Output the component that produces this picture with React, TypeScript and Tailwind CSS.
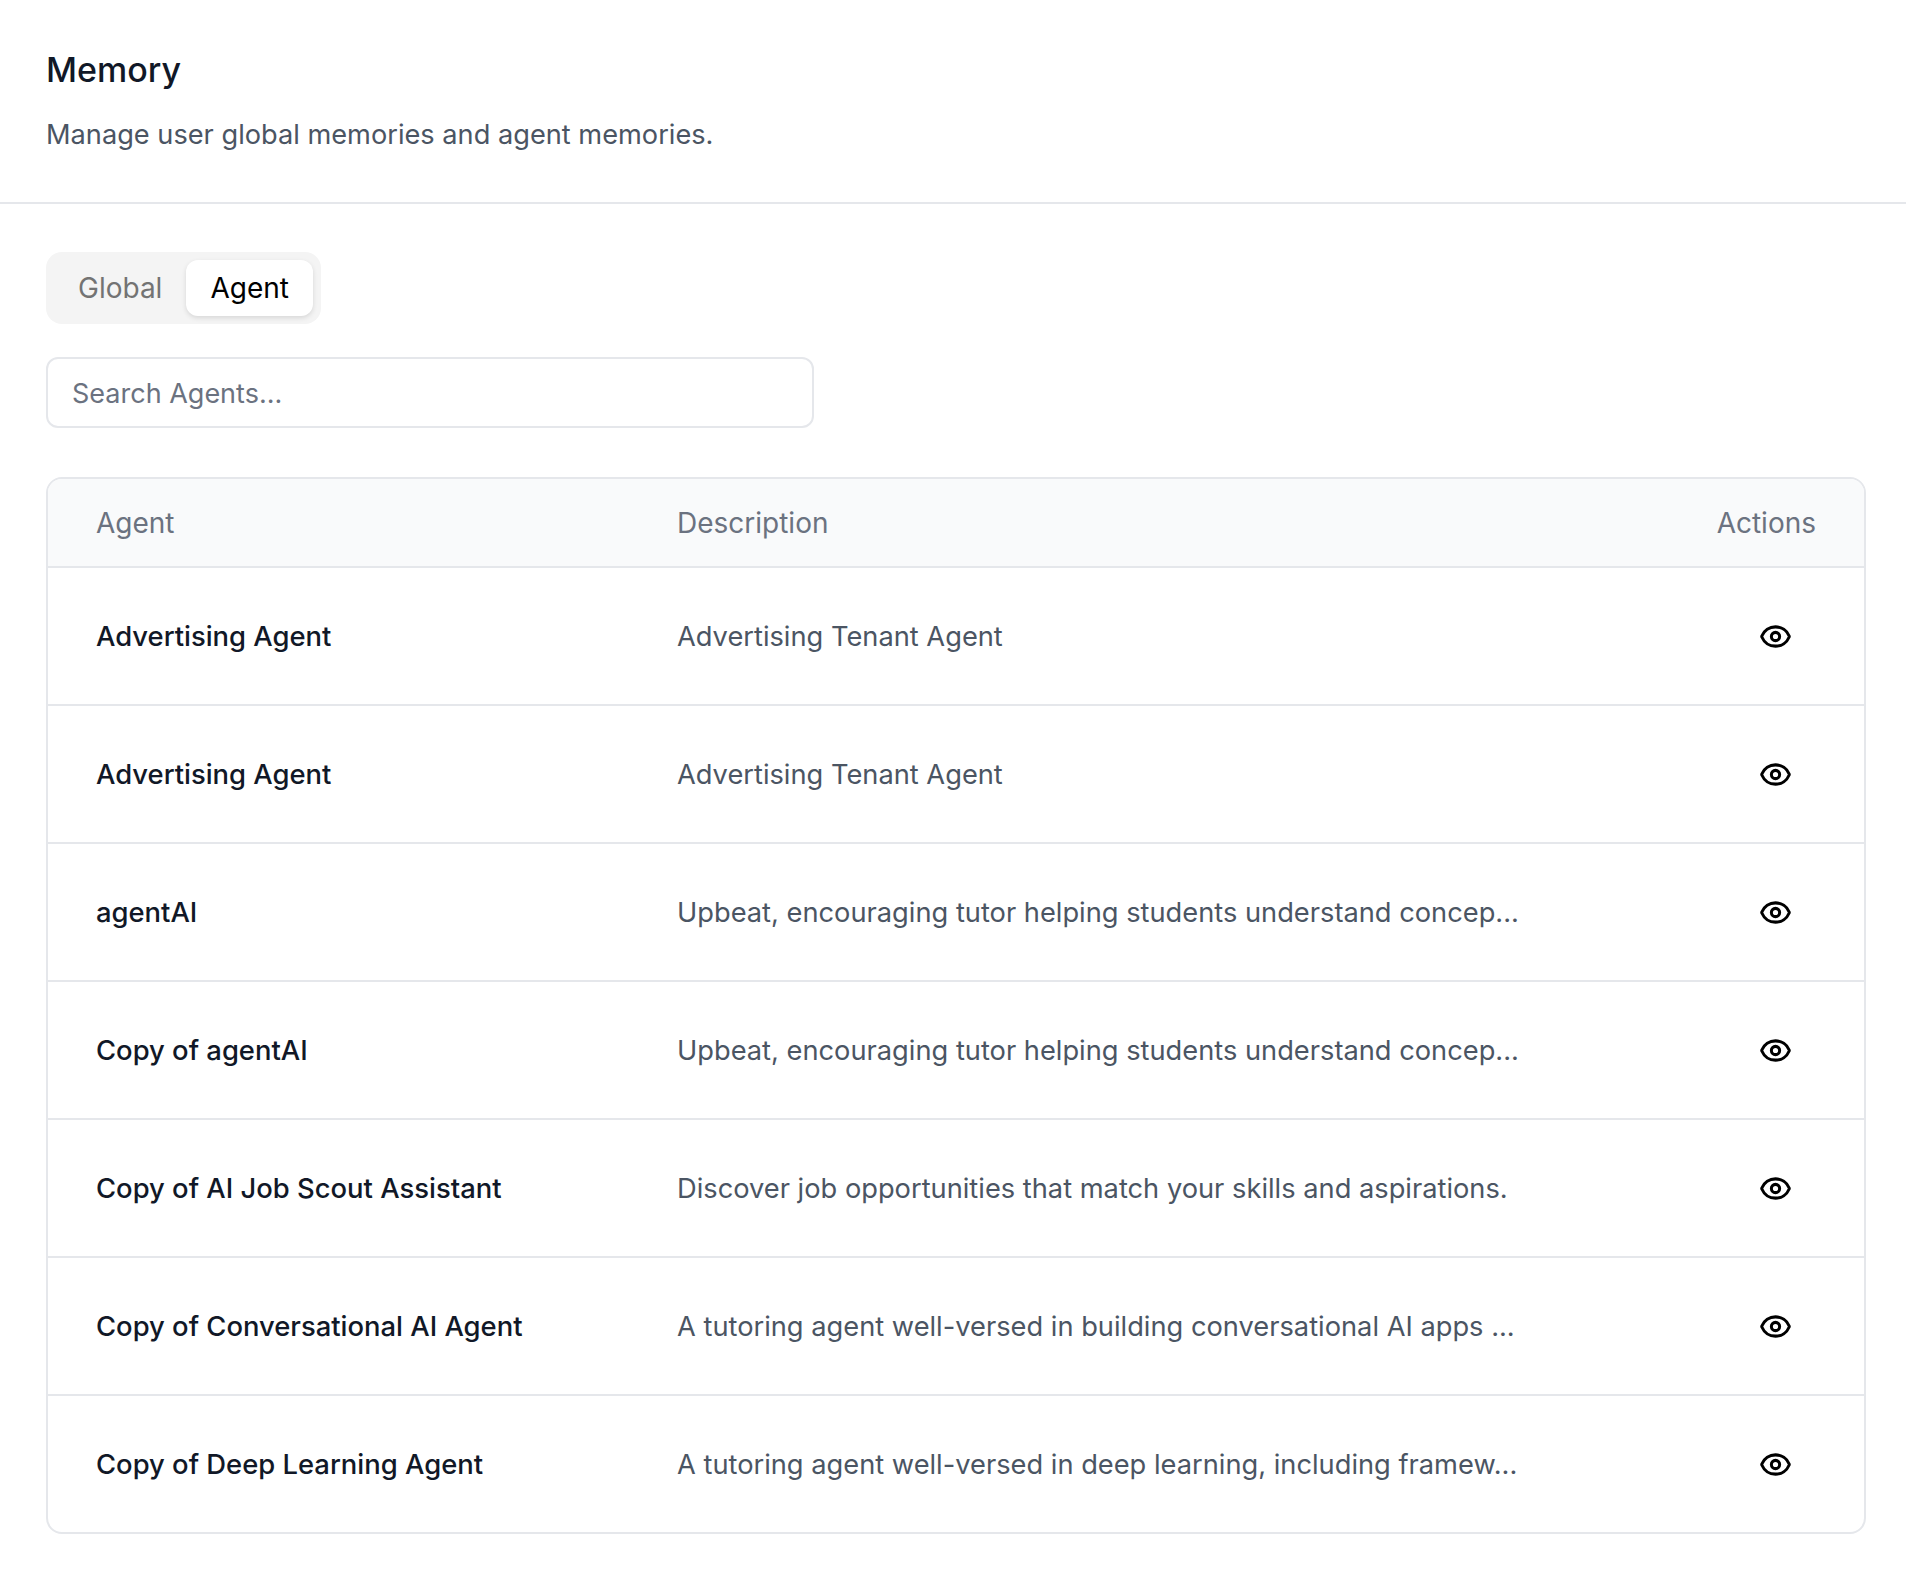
import { Eye } from "lucide-react";

const agents = [
  { name: "Advertising Agent", description: "Advertising Tenant Agent" },
  { name: "Advertising Agent", description: "Advertising Tenant Agent" },
  { name: "agentAI", description: "Upbeat, encouraging tutor helping students understand concep..." },
  { name: "Copy of agentAI", description: "Upbeat, encouraging tutor helping students understand concep..." },
  { name: "Copy of AI Job Scout Assistant", description: "Discover job opportunities that match your skills and aspirations." },
  { name: "Copy of Conversational AI Agent", description: "A tutoring agent well-versed in building conversational AI apps ..." },
  { name: "Copy of Deep Learning Agent", description: "A tutoring agent well-versed in deep learning, including framew..." },
];

export default function App() {
  return (
    <div className="min-h-[1590px] bg-white font-['Inter',sans-serif]">
      {/* Header */}
      <header className="h-[204px] border-b-2 border-[#e5e7eb] pl-[46px] pr-[40px] pt-[48px]">
        <h1 className="text-[34px] leading-[44px] font-medium text-[#111827]">Memory</h1>
        <p className="mt-[25px] text-[27.2px] leading-[36px] text-[#4b5563]">Manage user global memories and agent memories.</p>
      </header>

      <main className="pl-[46px] pr-[40px] pt-[48px]">
        {/* Tabs */}
        <div className="inline-flex h-[72px] items-center rounded-[16px] bg-[#f4f4f4] px-[8px]">
          <button className="px-[24px] text-[28px] text-[#737373]">Global</button>
          <button className="h-[56px] rounded-[12px] bg-white px-[24px] text-[28px] text-black shadow-[0_2px_5px_rgba(0,0,0,0.12)]">Agent</button>
        </div>

        {/* Search */}
        <div className="mt-[33px]">
          <input
            placeholder="Search Agents..."
            className="h-[71px] w-[768px] rounded-[12px] border-2 border-[#e5e7eb] px-[24px] pt-[1px] text-[27px] text-[#111827] outline-none placeholder:text-[#6b7280]"
          />
        </div>

        {/* Table */}
        <div className="mt-[49px] overflow-hidden rounded-[16px] border-2 border-[#e5e7eb]">
          <div className="flex h-[89px] items-center border-b-2 border-[#e5e7eb] bg-[#f9fafb] px-[48px] text-[28px] text-[#6b7280]">
            <div className="w-[581px]">Agent</div>
            <div className="flex-1">Description</div>
            <div>Actions</div>
          </div>
          {agents.map((agent, i) => (
            <div key={i} className="flex h-[138px] items-center border-b-2 border-[#e5e7eb] px-[48px] last:h-[136px] last:border-b-0">
              <div className="w-[581px] pt-[2px] text-[27.4px] font-medium text-[#111827]">{agent.name}</div>
              <div className="flex-1 pt-[2px] text-[27.25px] text-[#4b5563]">{agent.description}</div>
              <button className="mr-[24px] text-black">
                <Eye size={33} strokeWidth={2.2} />
              </button>
            </div>
          ))}
        </div>
      </main>
    </div>
  );
}
